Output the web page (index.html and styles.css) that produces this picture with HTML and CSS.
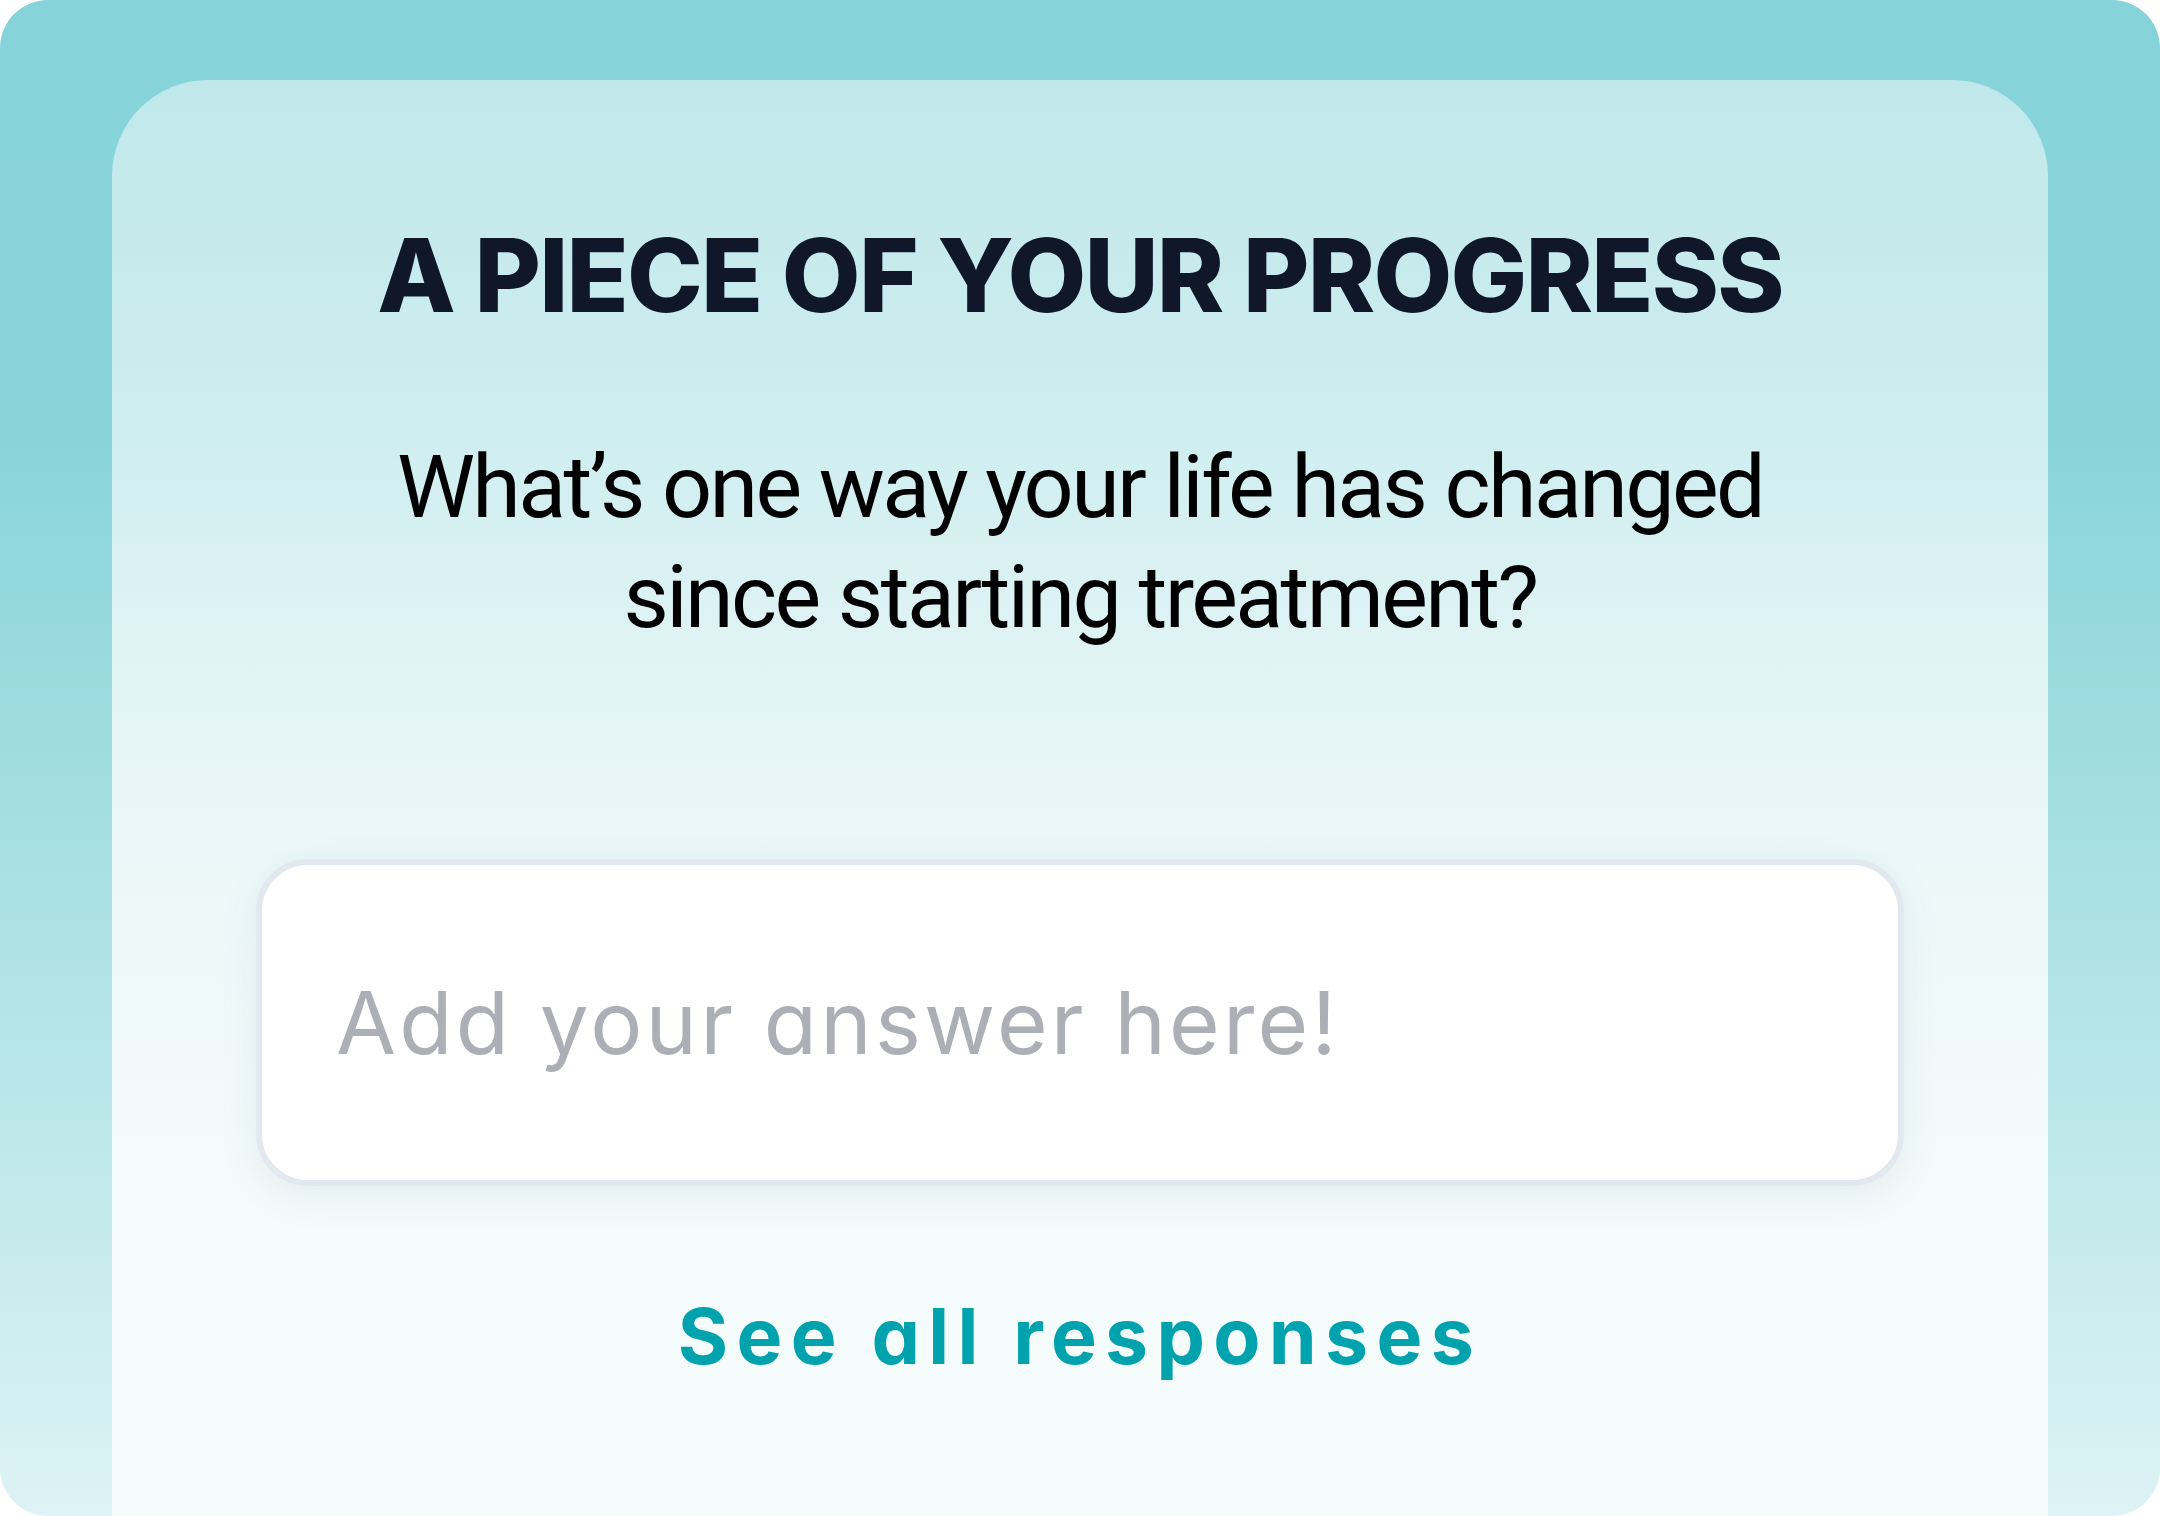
FILE: index.html
```html
<!DOCTYPE html>
<html lang="en">
<head>
<meta charset="utf-8">
<title>A Piece of Your Progress</title>
<link rel="stylesheet" href="styles.css">
</head>
<body>
<div class="frame">
  <section class="card">
    <h1 class="title">A PIECE OF YOUR PROGRESS</h1>
    <p class="question">What’s one way your life has changed<br>since starting treatment?</p>
    <div class="answer">
      <input class="answer-input" type="text" placeholder="Add your answer here!">
    </div>
    <a class="see-all" href="#">See all responses</a>
  </section>
</div>
</body>
</html>
```

FILE: styles.css
```css
* { box-sizing: border-box; }

html, body {
  margin: 0;
  padding: 0;
  background: #ffffff;
}

.frame {
  width: 2160px;
  height: 1516px;
  border-radius: 48px;
  overflow: hidden;
  padding: 80px 112px 0;
  background: linear-gradient(180deg, #86d3d9 0%, #88d4d9 28%, #a6dfe2 55%, #c4eaec 80%, #ddf3f5 100%);
}

.card {
  height: 1500px;
  border-radius: 96px 96px 0 0;
  background: linear-gradient(180deg, #c0e8ea 0%, #cdedef 22%, #e2f4f6 40%, #eef8f9 55%, #f4fbfb 75%, #f6fcfc 100%);
  padding-top: 144px;
  display: flex;
  flex-direction: column;
  align-items: center;
  font-family: Inter, "Liberation Sans", sans-serif;
}

.title {
  margin: 0;
  font-size: 102px;
  line-height: 102px;
  font-weight: 800;
  color: #0f1729;
  letter-spacing: -1.8px;
  text-align: center;
}

.question {
  margin: 106px 0 0;
  font-family: Roboto, Inter, "Liberation Sans", sans-serif;
  font-size: 88px;
  line-height: 110px;
  font-weight: 400;
  color: #000000;
  text-align: center;
  letter-spacing: -2.6px;
}

.answer {
  margin-top: 207px;
  width: 1648px;
  height: 327px;
  border: 6px solid #e2e8f0;
  border-radius: 52px;
  background: #ffffff;
  box-shadow: 0 10px 40px rgba(40, 90, 110, 0.08);
  display: flex;
  align-items: center;
  padding: 0 74px;
}

.answer-input {
  width: 100%;
  border: 0;
  outline: none;
  background: transparent;
  padding: 0;
  font-family: Inter, "Liberation Sans", sans-serif;
  font-feature-settings: "cv11" 1;
  font-size: 87px;
  font-weight: 400;
  letter-spacing: 3.2px;
  color: #374151;
  line-height: 120px;
  height: 120px;
}

.answer-input::placeholder {
  color: #acafb5;
  opacity: 1;
}

.see-all {
  margin-top: 112px;
  font-size: 77px;
  line-height: 77px;
  font-weight: 700;
  letter-spacing: 8.3px;
  color: #00a2ad;
  text-decoration: none;
  font-feature-settings: "cv11" 1;
}
```
